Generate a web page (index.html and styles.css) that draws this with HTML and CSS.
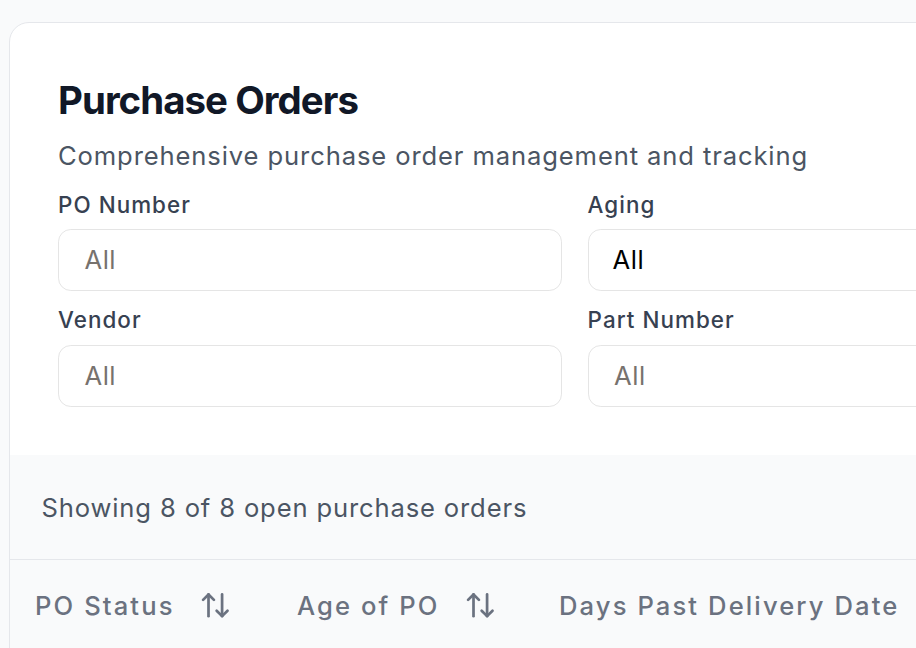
FILE: index.html
```html
<!DOCTYPE html>
<html lang="en">
<head>
<meta charset="utf-8">
<title>Purchase Orders</title>
<link rel="stylesheet" href="styles.css">
</head>
<body>
<div class="viewport">
  <div class="card">
    <section class="filters">
      <h1 class="title">Purchase Orders</h1>
      <p class="subtitle">Comprehensive purchase order management and tracking</p>
      <div class="grid">
        <div class="field">
          <label class="label">PO Number</label>
          <div class="input placeholder">All</div>
        </div>
        <div class="field">
          <label class="label">Aging</label>
          <div class="input select">All</div>
        </div>
        <div class="field">
          <label class="label">Vendor</label>
          <div class="input placeholder">All</div>
        </div>
        <div class="field">
          <label class="label">Part Number</label>
          <div class="input placeholder">All</div>
        </div>
      </div>
    </section>
    <div class="summary">Showing 8 of 8 open purchase orders</div>
    <div class="thead">
      <div class="th th-status">PO Status
        <svg class="sort" viewBox="0 0 24 24" fill="none" stroke="currentColor" stroke-width="2" stroke-linecap="round" stroke-linejoin="round"><path d="m21 16-4 4-4-4"/><path d="M17 20V4"/><path d="m3 8 4-4 4 4"/><path d="M7 4v16"/></svg>
      </div>
      <div class="th th-age">Age of PO
        <svg class="sort" viewBox="0 0 24 24" fill="none" stroke="currentColor" stroke-width="2" stroke-linecap="round" stroke-linejoin="round"><path d="m21 16-4 4-4-4"/><path d="M17 20V4"/><path d="m3 8 4-4 4 4"/><path d="M7 4v16"/></svg>
      </div>
      <div class="th th-days">Days Past Delivery Date</div>
    </div>
  </div>
</div>
</body>
</html>
```

FILE: styles.css
```css
html, body {
  margin: 0;
  padding: 0;
  background: #f9fafb;
  font-family: Inter, "Noto Sans", sans-serif;
}
.viewport {
  width: 916px;
  height: 648px;
  overflow: hidden;
  padding: 22px 0 0 8.5px;
  box-sizing: border-box;
}
.card {
  width: 1140px;
  background: #ffffff;
  border: 1.5px solid #e5e7eb;
  border-radius: 20px;
  overflow: hidden;
}
.filters {
  padding: 52px 48.5px 48px 48.5px;
}
.title {
  margin: 0;
  font-size: 38.4px;
  line-height: 51.2px;
  font-weight: 700;
  color: #111827;
  letter-spacing: -0.95px;
}
.subtitle {
  margin: 11px 0 0 0;
  font-size: 25.6px;
  line-height: 38.4px;
  color: #4b5563;
  letter-spacing: 0.88px;
}
.grid {
  display: grid;
  grid-template-columns: 504px 504px;
  column-gap: 25.6px;
  row-gap: 13.8px;
  margin-top: 12.9px;
}
.field {
  display: flex;
  flex-direction: column;
}
.label {
  font-size: 22.4px;
  line-height: 32px;
  font-weight: 500;
  color: #374151;
  letter-spacing: 1.05px;
  margin-bottom: 8.2px;
}
.input {
  height: 62px;
  box-sizing: border-box;
  border: 1.6px solid #e5e5e5;
  border-radius: 12.8px;
  padding-left: 25.5px;
  display: flex;
  align-items: center;
  font-size: 25.6px;
  letter-spacing: 0.5px;
}
.placeholder { color: #77726e; }
.select { color: #000000; padding-left: 24px; }
.summary {
  background: #f9fafb;
  padding: 34px 32px 32px 32px;
  font-size: 25.6px;
  line-height: 38.4px;
  color: #4b5563;
  letter-spacing: 0.85px;
  border-bottom: 1.6px solid #e5e7eb;
}
.thead {
  background: #f9fafb;
  display: flex;
  padding-top: 26.5px;
  height: 100px;
}
.th {
  display: flex;
  align-items: center;
  height: 38.4px;
  padding-left: 25.5px;
  box-sizing: border-box;
  font-size: 25.6px;
  line-height: 38.4px;
  font-weight: 500;
  letter-spacing: 2.1px;
  color: #6b7280;
}
.th-status { width: 262px; }
.th-age { width: 262px; }
.sort {
  width: 32.6px;
  height: 32.6px;
  margin-left: 24.5px;
  color: #6b7280;
  flex: none;
}
```
